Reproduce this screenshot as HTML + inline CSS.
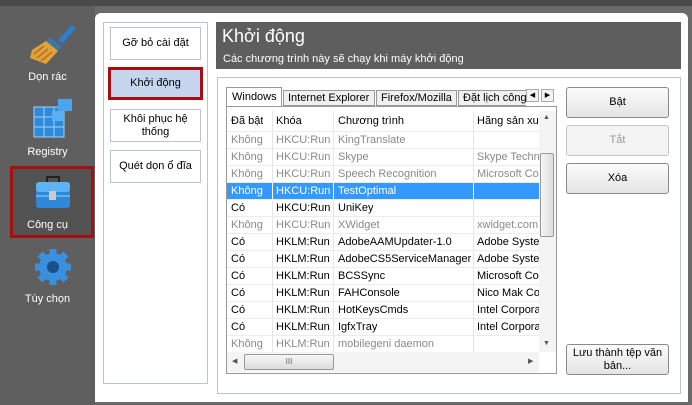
<!DOCTYPE html>
<html><head><meta charset="utf-8"><style>
*{margin:0;padding:0;box-sizing:border-box}
body{width:692px;height:405px;overflow:hidden;background:#6a6a6a;font-family:"Liberation Sans",sans-serif;font-size:11px;position:relative;color:#000}
.a{position:absolute}
.side{left:0;top:0;width:95px;height:405px;background:#5f5f5f}
.lbl{color:#fff;font-size:11px;text-align:center;width:95px;left:0}
.panel{left:95px;top:13px;width:593px;height:389px;background:#fff;border-radius:6px 6px 0 0}
.nav{left:103px;top:22px;width:105px;height:362px;border:1px solid #b9c6cf}
.nb{left:110px;width:91px;border:1px solid #b9c6cf;background:#fff;text-align:center;display:flex;align-items:center;justify-content:center;font-size:11px;line-height:13px}
.btn{left:566px;width:103px;height:31px;border:1px solid #8a8a8a;border-radius:3px;background:linear-gradient(#fbfbfb,#e4e4e4);display:flex;align-items:center;justify-content:center;font-size:11px;text-align:center;line-height:13px}
.row{left:227px;width:312px;height:17px;border-bottom:1px solid #ececec}
.row span{position:absolute;top:2px;white-space:nowrap;overflow:hidden}
.g{color:#8a8a8a}
.c1{left:4px}.c2{left:49px}.c3{left:111px}.c4{left:250px;width:62px}
.vl{width:1px;background:#e6e6e6;top:111px;height:241px}
</style></head><body>
<div class="a side"></div>
<div class="a" style="left:0;top:0;width:692px;height:6px;background:#4a4a4a"></div>
<!-- broom -->
<svg class="a" style="left:28px;top:20px" width="50" height="46" viewBox="0 0 50 46"><path d="M30 20 L44 5 L48 8 L34 24Z" fill="#2a7fd0"/><path d="M22 17 L34 27 L30 31 L18 21Z" fill="#3a78a8"/><path d="M18 21 L30 31 L18 44 L2 38 L4 30Z" fill="#e2a23a"/><path d="M6 34 L16 26 M9 38 L20 29 M13 41 L24 32" stroke="#b77020" stroke-width="1.5"/></svg>
<div class="a lbl" style="top:71px;text-decoration:underline 0 transparent">Dọn rác</div>
<!-- registry -->
<svg class="a" style="left:32px;top:97px" width="44" height="42"><rect x="2" y="10" width="30" height="30" fill="#2f8ad8"/><rect x="2" y="10" width="30" height="30" fill="none" stroke="#9fd3ff" stroke-width="1"/><path d="M2 20h30M2 30h30M12 10v30M22 10v30" stroke="#9fd3ff"/><rect x="26" y="2" width="14" height="12" fill="#4aa4ee"/><rect x="20" y="14" width="12" height="10" fill="#5ab0f2"/></svg>
<div class="a lbl" style="top:146px">Registry</div>
<div class="a" style="left:10px;top:166px;width:84px;height:72px;background:#525252;border:3px solid #a50f12"></div>
<svg class="a" style="left:33px;top:174px" width="40" height="38"><path d="M14 8v-5h12v5" fill="none" stroke="#222" stroke-width="2"/><rect x="3" y="8" width="34" height="26" rx="3" fill="#2f88d8"/><rect x="3" y="8" width="34" height="10" rx="3" fill="#5cb4f4"/><path d="M3 22h34" stroke="#9fd3ff"/><rect x="16" y="17" width="7" height="9" fill="#ccc"/></svg>
<div class="a lbl" style="top:219px">Công cụ</div>
<svg class="a" style="left:33px;top:247px" width="40" height="40" viewBox="0 0 40 40"><g fill="#3a90e0"><circle cx="20" cy="20" r="14"/><g stroke="#3a90e0" stroke-width="7"><path d="M20 2v36M2 20h36M7 7l26 26M33 7l-26 26"/></g></g><circle cx="20" cy="20" r="6" fill="#1b4f88"/></svg>
<div class="a lbl" style="top:293px">Tùy chọn</div>

<div class="a panel"></div>
<div class="a nav"></div>
<div class="a nb" style="top:27px;height:33px">Gỡ bỏ cài đặt</div>
<div class="a nb" style="top:67px;height:33px;background:#c5d5ee;border:3px solid #a50f12;left:108px;width:95px">Khởi động</div>
<div class="a nb" style="top:109px;height:33px">Khôi phục hệ<br>thống</div>
<div class="a nb" style="top:150px;height:33px">Quét dọn ổ đĩa</div>

<div class="a" style="left:216px;top:22px;width:465px;height:47px;background:#5e5e5e"></div>
<div class="a" style="left:222px;top:26px;color:#fff;font-size:18px">Khởi động</div>
<div class="a" style="left:223px;top:53px;color:#fff;font-size:11px">Các chương trình này sẽ chạy khi máy khởi động</div>
<div class="a" style="left:217px;top:77px;width:464px;height:317px;border:1px solid #b9c6cf"></div>

<!-- tabs -->
<div class="a" style="left:226px;top:87px;width:56px;height:20px;border:1px solid #999;border-bottom:none;background:#fff;padding:3px 0 0 5px">Windows</div>
<div class="a" style="left:283px;top:90px;width:92px;height:16px;border:1px solid #999;background:#f0f0f0;padding:1px 0 0 4px">Internet Explorer</div>
<div class="a" style="left:376px;top:90px;width:81px;height:16px;border:1px solid #999;background:#f0f0f0;padding:1px 0 0 4px">Firefox/Mozilla</div>
<div class="a" style="left:458px;top:90px;width:68px;height:16px;border:1px solid #999;border-right:none;background:#f0f0f0;padding:1px 0 0 4px;overflow:hidden;white-space:nowrap">Đặt lịch công việc</div>
<div class="a" style="left:526px;top:89px;width:13px;height:13px;border:1px solid #aaa;background:#f2f2f2;font-size:7px;text-align:center;line-height:11px">◀</div>
<div class="a" style="left:541px;top:89px;width:13px;height:13px;border:1px solid #aaa;background:#f2f2f2;font-size:7px;text-align:center;line-height:11px">▶</div>

<div class="a" style="left:226px;top:106px;width:331px;height:268px;border:1px solid #999;background:#fff"></div>
<div class="a vl" style="left:272px"></div><div class="a vl" style="left:333px"></div><div class="a vl" style="left:473px"></div>
<div class="a row" style="top:111px;height:21px"><span class="c1" style="top:4px">Đã bật</span><span class="c2" style="top:4px">Khóa</span><span class="c3" style="top:4px">Chương trình</span><span class="c4" style="top:4px">Hãng sản xuất</span></div>
<div class="a row g" style="top:132px"><span class="c1">Không</span><span class="c2">HKCU:Run</span><span class="c3">KingTranslate</span></div>
<div class="a row g" style="top:149px"><span class="c1">Không</span><span class="c2">HKCU:Run</span><span class="c3">Skype</span><span class="c4">Skype Technologies</span></div>
<div class="a row g" style="top:166px"><span class="c1">Không</span><span class="c2">HKCU:Run</span><span class="c3">Speech Recognition</span><span class="c4">Microsoft Corporation</span></div>
<div class="a row" style="top:183px;background:#3399ff;color:#fff"><span class="c1">Không</span><span class="c2">HKCU:Run</span><span class="c3">TestOptimal</span><i class="a" style="left:45px;top:0;width:1px;height:17px;background:#fff"></i><i class="a" style="left:106px;top:0;width:1px;height:17px;background:#fff"></i><i class="a" style="left:246px;top:0;width:1px;height:17px;background:#fff"></i></div>
<div class="a row" style="top:200px"><span class="c1">Có</span><span class="c2">HKCU:Run</span><span class="c3">UniKey</span></div>
<div class="a row g" style="top:217px"><span class="c1">Không</span><span class="c2">HKCU:Run</span><span class="c3">XWidget</span><span class="c4">xwidget.com</span></div>
<div class="a row" style="top:234px"><span class="c1">Có</span><span class="c2">HKLM:Run</span><span class="c3">AdobeAAMUpdater-1.0</span><span class="c4">Adobe Systems</span></div>
<div class="a row" style="top:251px"><span class="c1">Có</span><span class="c2">HKLM:Run</span><span class="c3">AdobeCS5ServiceManager</span><span class="c4">Adobe Systems</span></div>
<div class="a row" style="top:268px"><span class="c1">Có</span><span class="c2">HKLM:Run</span><span class="c3">BCSSync</span><span class="c4">Microsoft Corporation</span></div>
<div class="a row" style="top:285px"><span class="c1">Có</span><span class="c2">HKLM:Run</span><span class="c3">FAHConsole</span><span class="c4">Nico Mak Computing</span></div>
<div class="a row" style="top:302px"><span class="c1">Có</span><span class="c2">HKLM:Run</span><span class="c3">HotKeysCmds</span><span class="c4">Intel Corporation</span></div>
<div class="a row" style="top:319px"><span class="c1">Có</span><span class="c2">HKLM:Run</span><span class="c3">IgfxTray</span><span class="c4">Intel Corporation</span></div>
<div class="a row g" style="top:336px"><span class="c1">Không</span><span class="c2">HKLM:Run</span><span class="c3">mobilegeni daemon</span></div>
<!-- vscroll -->
<div class="a" style="left:539px;top:111px;width:17px;height:241px;background:#f4f4f4"></div>
<div class="a" style="left:543px;top:114px;font-size:7px;color:#555">▲</div>
<div class="a" style="left:543px;top:340px;font-size:7px;color:#555">▼</div>
<div class="a" style="left:540px;top:153px;width:14px;height:84px;border:1px solid #999;border-radius:2px;background:linear-gradient(90deg,#f6f6f6,#dcdcdc)"></div>
<!-- hscroll -->
<div class="a" style="left:227px;top:352px;width:312px;height:20px;background:#f4f4f4"></div>
<div class="a" style="left:232px;top:357px;font-size:7px;color:#555">◀</div>
<div class="a" style="left:528px;top:357px;font-size:7px;color:#555">▶</div>
<div class="a" style="left:244px;top:354px;width:90px;height:16px;border:1px solid #999;border-radius:2px;background:linear-gradient(#f6f6f6,#dcdcdc);text-align:center;font-size:8px;line-height:14px;color:#666">III</div>

<div class="a btn" style="top:87px">Bật</div>
<div class="a btn" style="top:125px;color:#999;border-color:#c4c4c4;background:#f4f4f4">Tắt</div>
<div class="a btn" style="top:163px">Xóa</div>
<div class="a btn" style="top:344px">Lưu thành tệp văn<br>bản...</div>
</body></html>
